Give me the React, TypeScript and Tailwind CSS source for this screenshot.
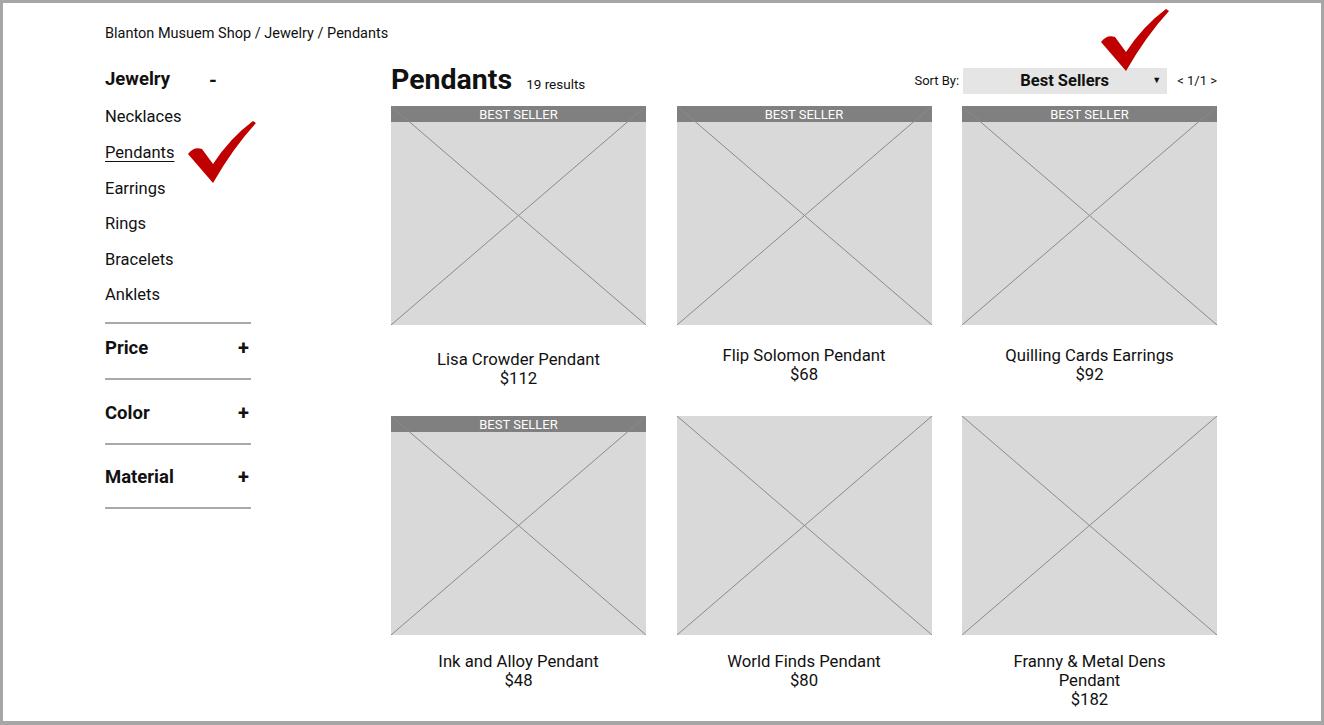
import React from 'react';

const font = { fontFamily: 'Roboto, "Noto Sans", sans-serif' };

interface Product {
  name: string;
  price: string;
  bestSeller: boolean;
  pt: string;
}

const products: Product[] = [
  { name: 'Lisa Crowder Pendant', price: '$112', bestSeller: true, pt: 'pt-[25px]' },
  { name: 'Flip Solomon Pendant', price: '$68', bestSeller: true, pt: 'pt-[21px]' },
  { name: 'Quilling Cards Earrings', price: '$92', bestSeller: true, pt: 'pt-[21px]' },
  { name: 'Ink and Alloy Pendant', price: '$48', bestSeller: true, pt: 'pt-[17px]' },
  { name: 'World Finds Pendant', price: '$80', bestSeller: false, pt: 'pt-[17px]' },
  { name: 'Franny & Metal Dens Pendant', price: '$182', bestSeller: false, pt: 'pt-[17px]' },
];

const categories = ['Necklaces', 'Pendants', 'Earrings', 'Rings', 'Bracelets', 'Anklets'];

function Check({ className }: { className: string }) {
  return (
    <svg className={className} width="68" height="62" viewBox="0 0 68 62">
      <path
        d="M0 33 Q6 25 14 28 L25 43 Q42 17 65 0 L68 2 Q45 27 25 62 Z"
        fill="#c00000"
      />
    </svg>
  );
}

function Placeholder({ bestSeller }: { bestSeller: boolean }) {
  return (
    <div className="relative h-[219px] bg-[#d9d9d9]">
      {bestSeller && (
        <div className="absolute left-0 right-0 top-0 flex h-[16px] items-center justify-center bg-[#808080] text-[13px] leading-none text-white">
          BEST SELLER
        </div>
      )}
      <svg className="absolute inset-0 h-full w-full" preserveAspectRatio="none" viewBox="0 0 255 219">
        <line x1="0" y1="0" x2="255" y2="219" stroke="#8a8a8a" strokeWidth="1" />
        <line x1="255" y1="0" x2="0" y2="219" stroke="#8a8a8a" strokeWidth="1" />
      </svg>
    </div>
  );
}

function FilterSection({ title, pt }: { title: string; pt: string }) {
  return (
    <div className={`${pt} pb-[21px] border-b-2 border-[#a9a9a9]`}>
      <div className="flex h-[18px] items-center justify-between pr-[2px] text-[18.5px] font-bold leading-[18px]">
        <span>{title}</span>
        <span className="text-[20px]">+</span>
      </div>
    </div>
  );
}

export default function App() {
  return (
    <div
      className="relative h-[725px] w-[1324px] border-[3px] border-b-4 border-[#a6a6a6] bg-white text-[#111]"
      style={font}
    >
      {/* Breadcrumb */}
      <div className="mt-[23px] pl-[102px] text-[14.5px] leading-[16px]">
        Blanton Musuem Shop / Jewelry / Pendants
      </div>

      <div className="mt-[22px] flex pl-[102px]">
        {/* Sidebar */}
        <aside className="w-[146px]">
          <div className="flex h-[31px] items-center justify-between pr-[34px] pt-[1px] text-[18.5px] font-bold">
            <span>Jewelry</span>
            <span className="text-[20px]">-</span>
          </div>
          <ul className="mt-[5px] text-[16.5px]">
            {categories.map((c) => (
              <li key={c} className="flex h-[35.6px] items-center">
                <span className={c === 'Pendants' ? 'underline underline-offset-[3px]' : ''}>{c}</span>
              </li>
            ))}
          </ul>
          <div className="mt-[8px] border-b-2 border-[#a9a9a9]" />
          <FilterSection title="Price" pt="pt-[15px]" />
          <FilterSection title="Color" pt="pt-[24px]" />
          <FilterSection title="Material" pt="pt-[23px]" />
        </aside>

        {/* Main */}
        <main className="ml-[140px] w-[826px]">
          <div className="flex h-[32px] items-center justify-between">
            <div className="flex items-baseline gap-[14px]">
              <h1 className="text-[28.5px] font-bold leading-[32px]">Pendants</h1>
              <span className="text-[13.5px]">19 results</span>
            </div>
            <div className="flex items-center pt-[2px] text-[13px]">
              <span>Sort By:</span>
              <div className="ml-[4px] flex h-[26px] w-[204px] items-center bg-[#e5e5e5] pr-[6px]">
                <span className="flex-1 pl-[14px] text-center text-[16.5px] font-bold">Best Sellers</span>
                <span className="text-[9px]">▼</span>
              </div>
              <span className="ml-[10px]">&lt; 1/1 &gt;</span>
            </div>
          </div>

          <div className="mt-[10px] grid grid-cols-[255px_255px_255px] justify-between">
            {products.map((p) => (
              <div key={p.name}>
                <Placeholder bestSeller={p.bestSeller} />
                <div className={`h-[91px] ${p.pt} px-[30px] text-center text-[16.7px] leading-[19px]`}>
                  <div>{p.name}</div>
                  <div>{p.price}</div>
                </div>
              </div>
            ))}
          </div>
        </main>
      </div>

      <Check className="absolute left-[185px] top-[118px]" />
      <Check className="absolute left-[1098px] top-[6px]" />
    </div>
  );
}
